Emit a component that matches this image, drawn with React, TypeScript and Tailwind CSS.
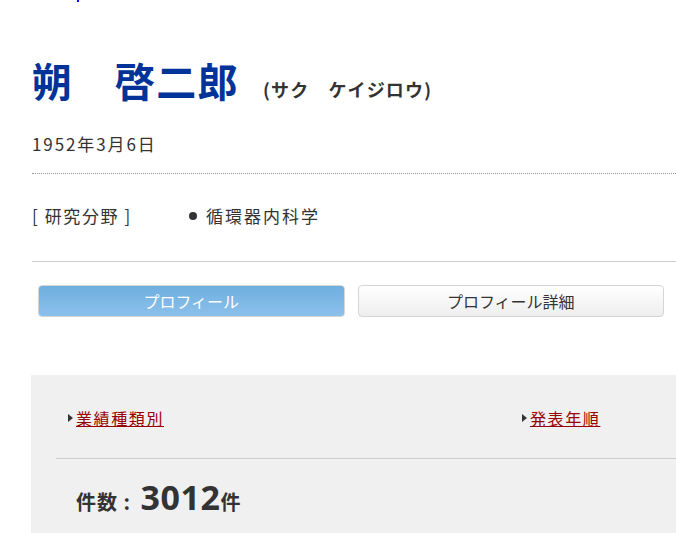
import React from "react";

export default function App() {
  return (
    <div
      className="relative w-[676px] h-[533px] overflow-hidden bg-white text-[#333]"
      style={{ fontFamily: '"Noto Sans CJK JP", "Noto Sans", sans-serif' }}
    >
      <div className="absolute left-[77px] top-0 w-[2px] h-[2px] bg-[#0000ff]" />
      <div className="pl-[32px] pt-[56px]">
        <div className="flex items-baseline">
          <h1 className="text-[40px] leading-[48px] font-bold text-[#003399] tracking-[1.4px]">
            朔　啓二郎
          </h1>
          <span className="ml-[24px] text-[18px] font-bold text-[#333] tracking-[1.2px]">(サク　ケイジロウ)</span>
        </div>
        <div className="mt-[28px] text-[17px] leading-[24px] tracking-[1.9px]">1952年3月6日</div>
        <div className="mt-[17px] border-t border-dotted border-[#999]" />
        <div className="mt-[30px] flex items-center text-[17px] leading-[24px] tracking-[1.6px]">
          <span className="w-[157px]">[ 研究分野 ]</span>
          <span className="flex items-center tracking-[2px]">
            <span className="w-[8px] h-[8px] rounded-full bg-[#333] mr-[9px]" />
            循環器内科学
          </span>
        </div>
        <div className="mt-[33px] border-t border-[#ccc]" />
        <div className="mt-[23px] flex gap-[13px] pl-[6px] pr-[12px]">
          <button className="flex-1 h-[32px] rounded-[4px] border border-[#d5d5d5] bg-gradient-to-b from-[#6eafe0] to-[#8cc0ea] text-white text-[16px]">
            プロフィール
          </button>
          <button className="flex-1 h-[32px] rounded-[4px] border border-[#d5d5d5] bg-gradient-to-b from-[#ffffff] to-[#eeeeee] text-[#333] text-[16px]">
            プロフィール詳細
          </button>
        </div>
      </div>
      <div className="ml-[31px] mt-[58px] bg-[#f0f0f0] h-[200px] pt-[31px]">
        <div className="flex pl-[37px] text-[16px] leading-[24px]">
          <div className="w-[454px] flex items-center">
            <span className="w-0 h-0 border-y-[4px] border-y-transparent border-l-[5px] border-l-[#333] mr-[3px]" />
            <a className="text-[#990000] underline tracking-[1.6px]">業績種類別</a>
          </div>
          <div className="flex items-center">
            <span className="w-0 h-0 border-y-[4px] border-y-transparent border-l-[5px] border-l-[#333] mr-[3px]" />
            <a className="text-[#990000] underline tracking-[1.6px]">発表年順</a>
          </div>
        </div>
        <div className="ml-[25px] mt-[28px] border-t border-[#ccc]" />
        <div className="pl-[45px] mt-[18px] flex items-baseline font-bold text-[#333]">
          <span className="text-[20px] tracking-[1px]">件数 :&nbsp;</span>
          <span className="ml-[4px] text-[34px] leading-[40px] tracking-[0.5px]" style={{ fontFamily: '"Noto Sans", sans-serif' }}>3012</span>
          <span className="text-[20px]">件</span>
        </div>
      </div>
    </div>
  );
}
